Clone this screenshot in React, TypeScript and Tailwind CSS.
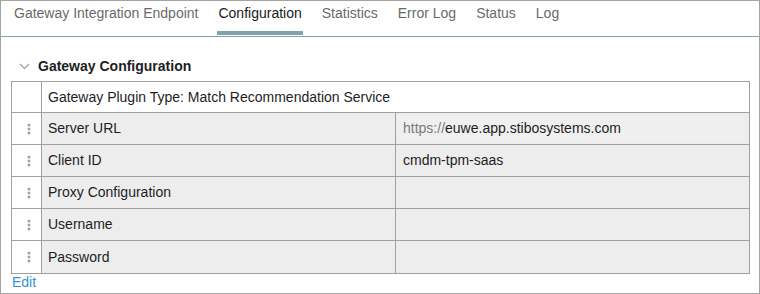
import React from "react"

const TABS = ["Gateway Integration Endpoint", "Configuration", "Statistics", "Error Log", "Status", "Log"]

const ROWS: { label: string; value?: React.ReactNode; boxed?: boolean }[] = [
    {
        label: "Server URL",
        value: (
            <>
                <span className="text-[#7a7a7a]">https://</span>euwe.app.stibosystems.com
            </>
        ),
        boxed: true,
    },
    { label: "Client ID", value: "cmdm-tpm-saas" },
    { label: "Proxy Configuration" },
    { label: "Username" },
    { label: "Password" },
]

function Handle() {
    return (
        <svg width="4" height="12" viewBox="0 0 4 12" className="block">
            <circle cx="2" cy="2" r="1.5" fill="#a3a3a3" />
            <circle cx="2" cy="6" r="1.5" fill="#a3a3a3" />
            <circle cx="2" cy="10" r="1.5" fill="#a3a3a3" />
        </svg>
    )
}

export default function App() {
    return (
        <div
            className="w-[760px] h-[294px] border border-[#a3a3a3] bg-white text-[14px] text-[#1e1e1e] overflow-hidden"
            style={{ fontFamily: "'Liberation Sans', Arial, sans-serif" }}
        >
            {/* tab strip */}
            <div className="h-[36px] border-b border-[#80a4ab] flex pl-[3px]">
                {TABS.map((t) => {
                    const active = t === "Configuration"
                    return (
                        <div key={t} className="flex flex-col px-[10px]">
                            <div className={`flex-1 flex items-center pb-[5px] ${active ? "text-[#1a1a1a]" : "text-[#6a6a6a]"}`}>
                                {t}
                            </div>
                            <div className={`h-[4px] mb-[1px] -mx-[1px] ${active ? "bg-[#80a4ab]" : ""}`} />
                        </div>
                    )
                })}
            </div>

            {/* section */}
            <div className="flex items-center h-[24px] mt-[17px] pl-[18px]">
                <svg width="11" height="7" viewBox="0 0 11 7" className="mr-[8px]">
                    <path d="M1 1 L5.5 5.5 L10 1" fill="none" stroke="#9a9a9a" strokeWidth="1.2" />
                </svg>
                <span className="font-bold">Gateway Configuration</span>
            </div>

            <div className="ml-[10px] mt-[3px] w-[739px] border border-[#a0a0a0]">
                <div className="flex h-[31px] border-b border-[#a0a0a0]">
                    <div className="w-[30px] border-r border-[#a0a0a0]" />
                    <div className="flex-1 flex items-center pl-[6px]">Gateway Plugin Type: Match Recommendation Service</div>
                </div>
                {ROWS.map((r, i) => (
                    <div key={r.label} className={`flex h-[32px] ${i < ROWS.length - 1 ? "border-b border-[#a0a0a0]" : "h-[31px]"}`}>
                        <div className="w-[30px] border-r border-[#a0a0a0] flex items-center justify-center pl-[5px]">
                            <Handle />
                        </div>
                        <div className="w-[354px] border-r border-[#a0a0a0] bg-[#ededed] flex items-center pl-[6px]">
                            {r.label}
                        </div>
                        <div className="flex-1 bg-[#ededed] flex">
                            {r.boxed ? (
                                <div className="flex-1 m-[2px] mr-[5px] bg-[#efefef] flex items-center pl-[5px]">{r.value}</div>
                            ) : (
                                <div className="flex-1 flex items-center pl-[7px]">{r.value}</div>
                            )}
                        </div>
                    </div>
                ))}
            </div>

            <div className="pl-[11px] text-[#3a93d2] leading-[16px]">Edit</div>
        </div>
    )
}
